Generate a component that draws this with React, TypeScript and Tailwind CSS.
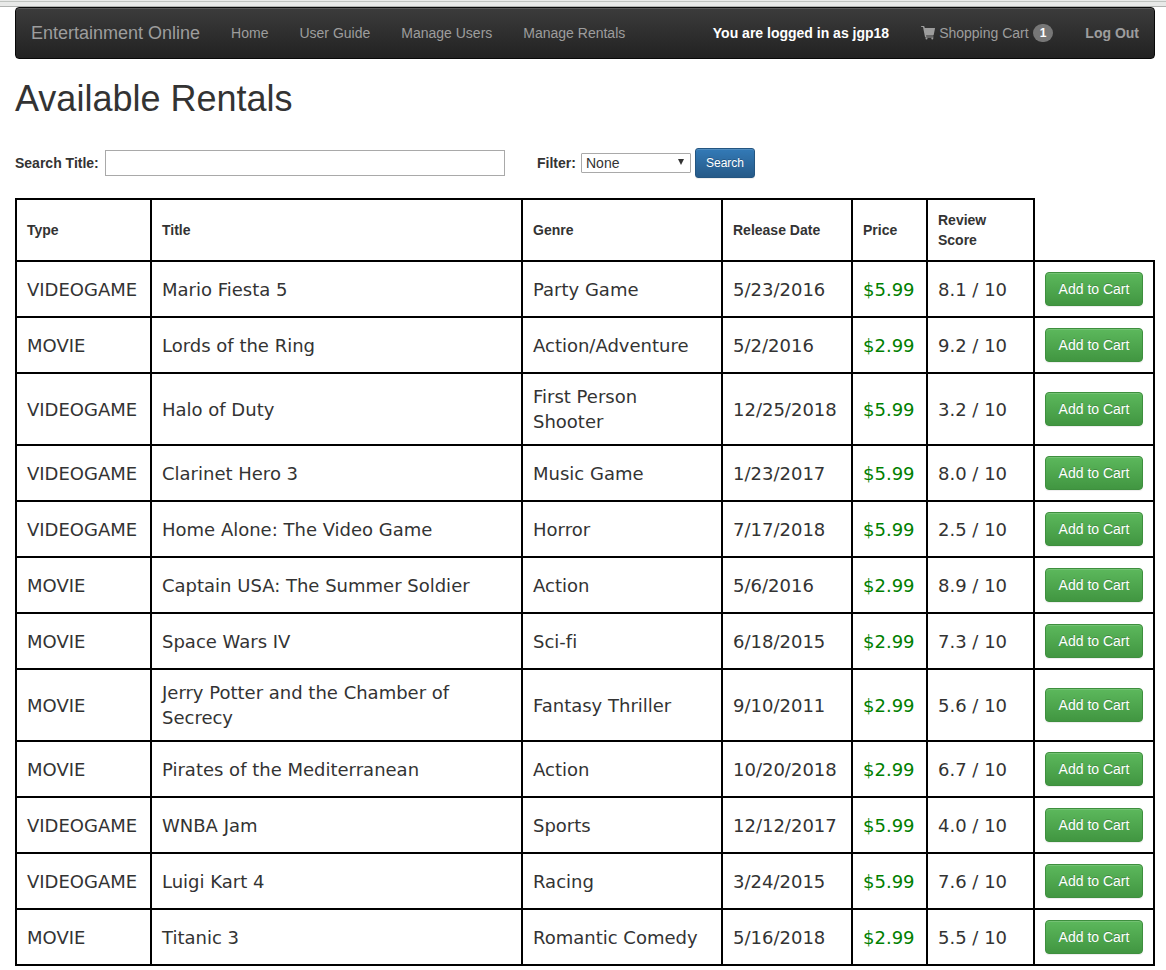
import React from "react";

type Kind = "VIDEOGAME" | "MOVIE";

interface Rental {
  kind: Kind;
  title: string;
  genre: string;
  released: string;
  score: string;
}

const PRICES: Record<Kind, string> = { VIDEOGAME: "$5.99", MOVIE: "$2.99" };

const RENTALS: Rental[] = [
  { kind: "VIDEOGAME", title: "Mario Fiesta 5", genre: "Party Game", released: "5/23/2016", score: "8.1" },
  { kind: "MOVIE", title: "Lords of the Ring", genre: "Action/Adventure", released: "5/2/2016", score: "9.2" },
  { kind: "VIDEOGAME", title: "Halo of Duty", genre: "First Person Shooter", released: "12/25/2018", score: "3.2" },
  { kind: "VIDEOGAME", title: "Clarinet Hero 3", genre: "Music Game", released: "1/23/2017", score: "8.0" },
  { kind: "VIDEOGAME", title: "Home Alone: The Video Game", genre: "Horror", released: "7/17/2018", score: "2.5" },
  { kind: "MOVIE", title: "Captain USA: The Summer Soldier", genre: "Action", released: "5/6/2016", score: "8.9" },
  { kind: "MOVIE", title: "Space Wars IV", genre: "Sci-fi", released: "6/18/2015", score: "7.3" },
  { kind: "MOVIE", title: "Jerry Potter and the Chamber of Secrecy", genre: "Fantasy Thriller", released: "9/10/2011", score: "5.6" },
  { kind: "MOVIE", title: "Pirates of the Mediterranean", genre: "Action", released: "10/20/2018", score: "6.7" },
  { kind: "VIDEOGAME", title: "WNBA Jam", genre: "Sports", released: "12/12/2017", score: "4.0" },
  { kind: "VIDEOGAME", title: "Luigi Kart 4", genre: "Racing", released: "3/24/2015", score: "7.6" },
  { kind: "MOVIE", title: "Titanic 3", genre: "Romantic Comedy", released: "5/16/2018", score: "5.5" },
];

const COLUMNS = ["Type", "Title", "Genre", "Release Date", "Price", "Review Score"];
const LINKS = ["Home", "User Guide", "Manage Users", "Manage Rentals"];

function CartIcon() {
  return (
    <svg viewBox="0 0 14 14" className="h-3.5 w-3.5 shrink-0" fill="currentColor" aria-hidden="true">
      <path d="M.4 0h2.4c.3 0 .5.2.6.5L3.800 2H13.500c.4 0 .6.3.5.6l-1.300 6.400c0 .3-.3.5-.6.5H5l.3 1h6.900c.6 0 .6 1 0 1H4.600c-.3 0-.5-.2-.6-.5L2 1H.4C-.1 1-.1 0 .4 0z" />
      <circle cx="5.500" cy="12.500" r="1" />
      <circle cx="11.300" cy="12.500" r="1" />
    </svg>
  );
}

function Navbar() {
  return (
    <nav className="flex h-[52px] items-center justify-between whitespace-nowrap rounded border border-[#080808] bg-linear-to-b from-[#3c3c3c] to-[#222222] px-[15px] text-sm text-[#9d9d9d] shadow-[inset_0_1px_0_rgba(255,255,255,0.15)]">
      <div className="flex items-center gap-[31px]">
        <a href="#" className="text-lg">
          Entertainment Online
        </a>
        {LINKS.map((link) => (
          <a key={link} href="#">
            {link}
          </a>
        ))}
      </div>
      <div className="flex items-center gap-8">
        <span className="font-bold text-white">You are logged in as jgp18</span>
        <a href="#" className="flex items-center gap-1">
          <CartIcon />
          Shopping Cart
          <span className="rounded-full bg-[#777777] px-[7px] py-[3px] text-xs leading-3 font-bold text-white">1</span>
        </a>
        <a href="#" className="font-bold">
          Log Out
        </a>
      </div>
    </nav>
  );
}

function SearchForm() {
  return (
    <form className="mt-[29px] flex h-[30px] items-center text-sm" onSubmit={(e) => e.preventDefault()}>
      <label htmlFor="title" className="w-[90px] font-bold whitespace-nowrap">
        Search Title:
      </label>
      <input id="title" type="text" className="h-[26px] w-[400px] border border-[#a9a9a9] bg-white px-1 outline-none" />
      <label htmlFor="filter" className="ml-8 w-11 font-bold whitespace-nowrap">
        Filter:
      </label>
      <div className="relative">
        <select
          id="filter"
          defaultValue="None"
          className="block h-5 w-[110px] appearance-none rounded-[1px] border border-[#a9a9a9] bg-white pl-1 text-sm leading-4 outline-none"
        >
          <option>None</option>
          <option>Type</option>
          <option>Genre</option>
        </select>
        <svg viewBox="0 0 6 6" className="pointer-events-none absolute top-1.5 right-[7px] h-1.5 w-1.5" fill="#333333" aria-hidden="true">
          <path d="M0 0h6L3 6z" />
        </svg>
      </div>
      <button
        type="submit"
        className="ml-1 h-[30px] rounded-[3px] border border-[#245580] bg-linear-to-b from-[#337ab7] to-[#265a88] px-2.5 text-xs text-white shadow-[inset_0_1px_0_rgba(255,255,255,0.15),0_1px_1px_rgba(0,0,0,0.075)] text-shadow-[0_-1px_0_rgba(0,0,0,0.2)]"
      >
        Search
      </button>
    </form>
  );
}

function RentalTable() {
  return (
    <table className="mt-5 w-full table-fixed border-collapse text-left">
      <colgroup>
        <col className="w-[135px]" />
        <col />
        <col className="w-[200px]" />
        <col className="w-[130px]" />
        <col className="w-[75px]" />
        <col className="w-[107px]" />
        <col className="w-[120px]" />
      </colgroup>
      <thead>
        <tr className="text-sm leading-5">
          {COLUMNS.map((name) => (
            <th key={name} scope="col" className="border-2 border-black p-2.5 font-bold">
              {name}
            </th>
          ))}
          <td />
        </tr>
      </thead>
      <tbody className="font-['DejaVu_Sans',sans-serif] text-lg leading-[25px] [font-variant-ligatures:none]">
        {RENTALS.map((rental) => (
          <tr key={rental.title} className="[&>td]:border-2 [&>td]:border-black [&>td]:p-2.5">
            <td>{rental.kind}</td>
            <td>{rental.title}</td>
            <td>{rental.genre}</td>
            <td>{rental.released}</td>
            <td className="text-[#008000]">{PRICES[rental.kind]}</td>
            <td>{rental.score} / 10</td>
            <td>
              <button
                type="button"
                className="block h-[34px] w-full rounded border border-[#3e8f3e] bg-linear-to-b from-[#5cb85c] to-[#419641] font-['Liberation_Sans',Arial,sans-serif] text-sm whitespace-nowrap text-white shadow-[inset_0_1px_0_rgba(255,255,255,0.15),0_1px_1px_rgba(0,0,0,0.075)] text-shadow-[0_-1px_0_rgba(0,0,0,0.2)]"
              >
                Add to Cart
              </button>
            </td>
          </tr>
        ))}
      </tbody>
    </table>
  );
}

export default function App() {
  return (
    <div className="min-h-screen bg-white font-['Liberation_Sans',Arial,sans-serif] text-[#333333]">
      <div className="h-[7px] border-b border-[#b0b2b0] bg-[#e8e9e8] pt-px">
        <div className="h-px bg-[#bfc3bf]" />
      </div>
      <main className="pr-[11px] pl-[15px]">
        <Navbar />
        <h1 className="mt-5 text-4xl leading-10">Available Rentals</h1>
        <SearchForm />
        <RentalTable />
      </main>
    </div>
  );
}
